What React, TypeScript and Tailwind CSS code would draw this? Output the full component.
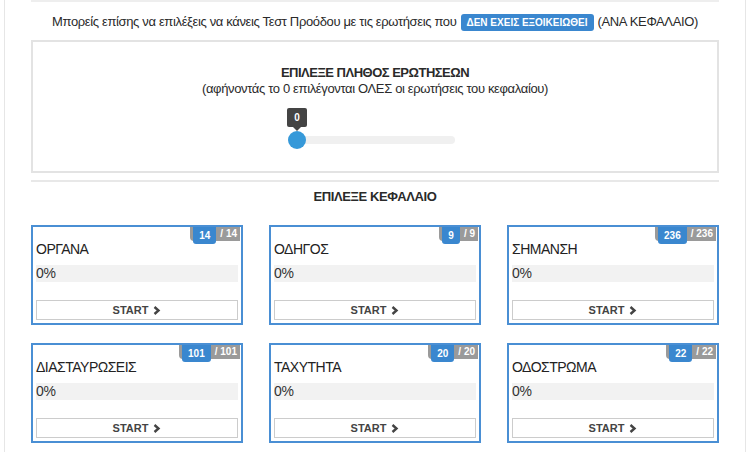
import React from 'react';

interface Chapter {
  title: string;
  done: number;
  total: number;
}

const chapters: Chapter[] = [
  { title: 'ΟΡΓΑΝΑ', done: 14, total: 14 },
  { title: 'ΟΔΗΓΟΣ', done: 9, total: 9 },
  { title: 'ΣΗΜΑΝΣΗ', done: 236, total: 236 },
  { title: 'ΔΙΑΣΤΑΥΡΩΣΕΙΣ', done: 101, total: 101 },
  { title: 'ΤΑΧΥΤΗΤΑ', done: 20, total: 20 },
  { title: 'ΟΔΟΣΤΡΩΜΑ', done: 22, total: 22 },
];

const ChapterCard: React.FC<{ chapter: Chapter }> = ({ chapter }) => (
  <div className="relative h-[100px] border-2 border-[#4a8fd4] bg-white px-[3px] pt-[9px]">
    <div className="absolute right-[1px] top-0 flex h-[14px] items-center rounded-bl-[4px] bg-[#9a9a9a] pl-[3px] pr-[3px] text-[10px] font-bold leading-none text-white">
      <span className="-mb-[3px] flex h-[17px] items-center rounded-b-[3px] bg-[#3a87cf] px-[6px]">{chapter.done}</span>
      <span className="pl-[4px]">/ {chapter.total}</span>
    </div>
    <div className="h-[24px] pt-[4px] text-[14px] leading-[18px] tracking-[-0.5px] text-[#222]">{chapter.title}</div>
    <div className="mt-[5px] flex h-[17px] items-center bg-[#f2f2f2] text-[14px] tracking-[-0.3px] text-[#333]">0%</div>
    <button className="mt-[18px] flex h-[20px] w-full items-center justify-center gap-[5px] border border-[#ccc] bg-white text-[11px] font-bold text-[#444]">
      START
      <svg width="8" height="9" viewBox="0 0 8 9">
        <path d="M1.5 1 L5.5 4.5 L1.5 8" fill="none" stroke="#444" strokeWidth="2.4" />
      </svg>
    </button>
  </div>
);

export default function App() {
  return (
    <div className="h-[452px] w-[750px] overflow-hidden bg-white font-['Liberation_Sans',Arial,sans-serif] text-[#2a2a2a]">
      <div className="mx-[4px] h-full border-x border-[#e6e6e6] px-[26px]">
        <div className="border-t-2 border-[#eee]" />
        <div className="flex h-[38px] items-center justify-center gap-[4px] pt-[2px] text-[13px] tracking-[-0.35px]">
          <span>Μπορείς επίσης να επιλέξεις να κάνεις Τεστ Προόδου με τις ερωτήσεις που</span>
          <span className="rounded-[3px] bg-[#3a87cf] px-[6px] py-[3px] text-[10px] font-bold leading-[11px] tracking-normal text-white">ΔΕΝ ΕΧΕΙΣ ΕΞΟΙΚΕΙΩΘΕΙ</span>
          <span>(ΑΝΑ ΚΕΦΑΛΑΙΟ)</span>
        </div>
        <div className="h-[133px] border-2 border-[#e3e3e3] pt-[23px] text-center">
          <div className="text-[13px] font-bold leading-[16px] tracking-[-0.5px]">ΕΠΙΛΕΞΕ ΠΛΗΘΟΣ ΕΡΩΤΗΣΕΩΝ</div>
          <div className="text-[13px] leading-[16px] tracking-[-0.35px]">(αφήνοντάς το 0 επιλέγονται ΟΛΕΣ οι ερωτήσεις του κεφαλαίου)</div>
          <div className="relative ml-[255px] mt-[11px] h-[40px] w-[167px]">
            <div className="absolute -left-[1px] top-0 flex h-[19px] w-[20px] items-center justify-center rounded-[2px] bg-[#444] text-[10px] font-bold text-white">
              0
              <div className="absolute -bottom-[4px] left-1/2 -ml-[4px] h-0 w-0 border-x-[4px] border-t-[4px] border-x-transparent border-t-[#444]" />
            </div>
            <div className="absolute left-[2px] right-0 top-[28px] h-[8px] rounded-full bg-[#f0f0f0]" />
            <div className="absolute left-0 top-[23px] h-[18px] w-[18px] rounded-full bg-[#3699d9]" />
          </div>
        </div>
        <div className="mt-[7px] border-t-2 border-[#e8e8e8]" />
        <div className="flex h-[30px] items-center justify-center text-[13px] font-bold tracking-[-0.4px]">ΕΠΙΛΕΞΕ ΚΕΦΑΛΑΙΟ</div>
        <div className="mt-[13px] grid grid-cols-3 gap-x-[26px] gap-y-[18px]">
          {chapters.map((c) => (
            <ChapterCard key={c.title} chapter={c} />
          ))}
        </div>
      </div>
    </div>
  );
}
